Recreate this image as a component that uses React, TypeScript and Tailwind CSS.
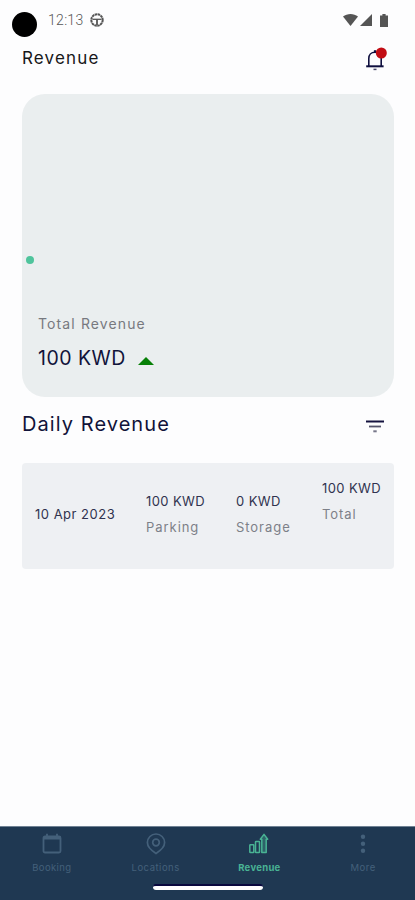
interface RevenueEntry {
  id: string
  date: string
  parking: string
  storage: string
  total: string
}

const entries: RevenueEntry[] = [
  { id: "1", date: "10 Apr 2023", parking: "100 KWD", storage: "0 KWD", total: "100 KWD" },
]

function StatusBar() {
  return (
    <div className="flex h-10 items-center pl-3 pr-[27px]">
      <div className="mt-[8px] size-[25px] rounded-full bg-black" />
      <span className="ml-[11px] w-[36px] whitespace-nowrap font-['Roboto'] text-[14px] leading-5 font-light tracking-[0.3px] text-[#555]">
        12:13
      </span>
      <svg className="ml-[6px] size-[14px]" viewBox="0 0 14 14" fill="none" stroke="#555">
        <circle cx="7" cy="7" r="5.7" strokeWidth="2" strokeDasharray="2.5 0.48" />
        <path d="M2.500 6.300h9" strokeWidth="1.300" />
        <path d="M7 6v6" strokeWidth="1.800" />
      </svg>
      <div className="ml-auto flex items-center">
        <svg className="h-[12px] w-[15px]" viewBox="0 0 15 12" fill="#555">
          <path d="M0 2.6C4.2-.8 10.8-.8 15 2.6L7.5 12Z" />
        </svg>
        <svg className="ml-[2px] size-[12px]" viewBox="0 0 12 12" fill="#555">
          <path d="M12 0v12H0Z" />
        </svg>
        <svg className="ml-[8px] h-[13px] w-[8px]" viewBox="0 0 8 13" fill="#555">
          <path d="M2.4 0h3.2v1.4H8V13H0V1.4h2.4Z" />
        </svg>
      </div>
    </div>
  )
}

function BellIcon() {
  return (
    <svg className="h-[25px] w-[22px]" viewBox="0 0 22 25" fill="none">
      <path d="M3.800 20V12.500c0-3.400 2.300-6.200 6.200-6.200s6.200 2.800 6.200 6.200V20" stroke="#0f0f3f" strokeWidth="1.600" />
      <path d="M8.900 4.200h2.200v2.400H8.900z" fill="#0f0f3f" />
      <path d="M1.200 20.300h17.400" stroke="#0f0f3f" strokeWidth="2" />
      <path d="M8.500 23.400h3" stroke="#4a4a6c" strokeWidth="1.500" />
      <circle cx="16.300" cy="7" r="5.500" fill="#c20d14" />
    </svg>
  )
}

function TotalCard() {
  return (
    <section className="flex h-[303px] flex-col rounded-[23px] bg-[#eaeeef] px-1">
      <div className="mt-[162px] size-[8px] rounded-full bg-[#4fc49c]" />
      <div className="mt-[49px] pl-[12px]">
        <p className="text-[14px] leading-[22px] tracking-[1.12px] text-[#77797f]">Total Revenue</p>
        <div className="mt-[11px] flex items-center">
          <span className="w-[100px] whitespace-nowrap text-[19.5px] leading-6 tracking-[0.5px] text-[#11133a]">
            100 KWD
          </span>
          <svg className="mt-[6px] h-[8px] w-[16px]" viewBox="0 0 16 8" fill="#078007">
            <path d="M8 0l8 8H0Z" />
          </svg>
        </div>
      </div>
    </section>
  )
}

function Amount({ value, label }: { value: string; label: string }) {
  return (
    <div className="whitespace-nowrap text-[13px] leading-5">
      <p className="tracking-[0.4px] text-[#30334f]">{value}</p>
      <p className="mt-[6px] tracking-[0.95px] text-[#7d8088]">{label}</p>
    </div>
  )
}

function RevenueRow({ entry }: { entry: RevenueEntry }) {
  return (
    <div className="grid h-[106px] grid-cols-[111px_90px_86px_1fr] rounded-[4px] bg-[#eef0f3] pl-[13px]">
      <p className="mt-[41px] whitespace-nowrap text-[13px] leading-5 tracking-[0.5px] text-[#30334f]">
        {entry.date}
      </p>
      <div className="pt-[28px]">
        <Amount value={entry.parking} label="Parking" />
      </div>
      <div className="pt-[28px]">
        <Amount value={entry.storage} label="Storage" />
      </div>
      <div className="pt-[15px]">
        <Amount value={entry.total} label="Total" />
      </div>
    </div>
  )
}

function BottomNav() {
  return (
    <nav className="flex h-[74px] flex-col items-center border-t border-[#708294] bg-[#1f3852] text-[9.5px] leading-3 text-[#44607a]">
      <div className="grid w-full grid-cols-4">
        <div className="flex flex-col items-center pt-[6px]">
          <svg className="size-[22px]" viewBox="0 0 22 22" fill="none" stroke="currentColor" strokeWidth="1.800">
            <rect x="2.500" y="3.500" width="17" height="16" rx="1.500" />
            <path d="M2.500 5h17" strokeWidth="3" />
            <path d="M6 .8v3M16 .8v3" />
          </svg>
          <span className="mt-[7px] tracking-[0.4px]">Booking</span>
        </div>
        <div className="flex flex-col items-center pt-[6px]">
          <svg className="size-[22px]" viewBox="0 0 22 22" fill="none" stroke="currentColor" strokeWidth="1.700">
            <path d="M11 20.400C7 18 2.400 14.600 2.400 9.600a8.600 8.600 0 0 1 17.200 0c0 5-4.600 8.400-8.600 10.800Z" />
            <circle cx="11" cy="9.500" r="3.300" />
          </svg>
          <span className="mt-[7px] tracking-[0.5px]">Locations</span>
        </div>
        <div className="flex flex-col items-center pt-[6px] text-[#49b394]">
          <svg className="size-[22px]" viewBox="0 0 22 22" fill="none" stroke="currentColor" strokeWidth="1.500">
            <rect x="1.800" y="11.800" width="4" height="7.800" rx=".6" />
            <rect x="7.500" y="8.500" width="4" height="11.100" rx=".6" />
            <path d="M13.800 19.600V6.200h-1.500L16 1.400l3.700 4.800h-1.500v13.400Z" fill="currentColor" fillOpacity="0.35" strokeLinejoin="round" />
          </svg>
          <span className="mt-[7px] font-bold tracking-[0.3px]">Revenue</span>
        </div>
        <div className="flex flex-col items-center pt-[6px]">
          <svg className="size-[22px]" viewBox="0 0 22 22" fill="currentColor">
            <circle cx="11" cy="3.800" r="2.200" />
            <circle cx="11" cy="10.800" r="2.200" />
            <circle cx="11" cy="17.800" r="2.200" />
          </svg>
          <span className="mt-[7px] tracking-[0.5px]">More</span>
        </div>
      </div>
      <div className="mt-[10px] h-[6px] w-[110px] rounded-full border-t-2 border-[#09083e] bg-white" />
    </nav>
  )
}

export default function App() {
  return (
    <div className="flex h-[900px] w-[415px] flex-col overflow-hidden bg-[#fdfdfe] font-['Inter','Open_Sans',sans-serif]">
      <StatusBar />
      <main className="flex-1 pr-[21px] pl-[22px]">
        <header className="flex h-[54px] items-start justify-between pt-[6px] pr-[7px]">
          <h1 className="text-[17px] leading-6 tracking-[1.15px] text-[#171719]">Revenue</h1>
          <BellIcon />
        </header>
        <TotalCard />
        <div className="flex h-[66px] items-start justify-between pt-[13px] pr-[9px]">
          <h2 className="text-[20px] leading-7 tracking-[1.07px] text-[#11133a]">Daily Revenue</h2>
          <svg className="mt-[10px] h-[13px] w-[20px]" viewBox="0 0 20 13" fill="none">
            <path d="M1 1.500h18" stroke="#14123f" strokeWidth="2" />
            <path d="M4 6.500h12" stroke="#55556c" strokeWidth="1.800" />
            <path d="M8.300 11.300h3.400" stroke="#77778a" strokeWidth="2" />
          </svg>
        </div>
        {entries.map((entry) => (
          <RevenueRow key={entry.id} entry={entry} />
        ))}
      </main>
      <BottomNav />
    </div>
  )
}
